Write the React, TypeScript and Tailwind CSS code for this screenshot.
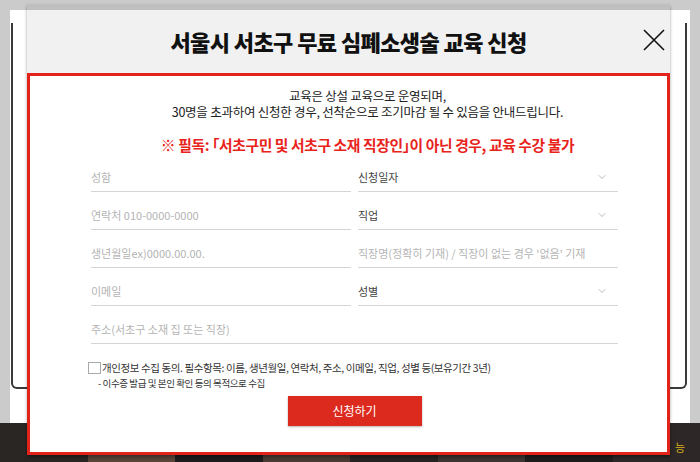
import { ChevronDown } from "lucide-react"

const fields = [
  { left: "성함", right: "신청일자", select: true },
  { left: "연락처 010-0000-0000", right: "직업", select: true },
  { left: "생년월일ex)0000.00.00.", right: "직장명(정확히 기재) / 직장이 없는 경우 '없음' 기재", select: false },
  { left: "이메일", right: "성별", select: true },
]

const strip = ["bg-[#2a2624]", "bg-[#5a4538]", "bg-[#1d1b1b]", "bg-[#4a3a33]", "bg-[#262222]", "bg-[#3b3430]", "bg-[#1f1c1c]", "bg-[#2d2727]"]

function Row({ text, select }: { text: string; select?: boolean }) {
  return (
    <div className="h-[38px] border-b border-[#d4d4d4] flex items-end justify-between pb-[7px]">
      <span className={`text-[11px] leading-[14px] ${select ? "text-[#444]" : "text-[#b4b4b4]"}`}>{text}</span>
      {select && <ChevronDown className="w-[12px] h-[12px] mr-[10px] mb-[1px] text-[#8a8a8a]" strokeWidth={1.2} />}
    </div>
  )
}

export default function App() {
  return (
    <div className="relative w-[700px] h-[462px] overflow-hidden bg-[#cbcbcb] font-['Noto_Sans_CJK_KR','Noto_Sans',sans-serif]">
      {/* page behind the modal */}
      <div className="absolute left-[10px] top-[10px] w-[680px] h-[413px] bg-white">
        <div className="ml-[1px] mt-[13px] w-[676px] h-[366px] border-x-2 border-b-2 border-[#3a3a3a] rounded-b-[6px]" />
      </div>
      <div className="absolute left-0 top-[423px] w-[700px] h-[39px] flex bg-[#222]">
        {strip.map((c, i) => (
          <div key={i} className={`flex-1 ${c}`} />
        ))}
        <span className="absolute right-[15px] top-[17px] text-[11px] leading-[14px] text-[#d8b21a]">능</span>
      </div>

      {/* modal */}
      <div className="absolute left-[27px] top-[4px] w-[643px] shadow-[0_2px_3px_rgba(0,0,0,0.35)]">
        <div className="relative h-[69px] bg-black/[0.055] flex items-center justify-center pt-[6px]">
          <h1 className="text-[22px] font-black tracking-[-0.6px] text-[#111]">서울시 서초구 무료 심폐소생술 교육 신청</h1>
          <svg className="absolute right-[5px] top-[25px]" width="22" height="22" viewBox="0 0 22 22">
            <path d="M1 1L21 21M21 1L1 21" stroke="#111" strokeWidth="1.6" fill="none" />
          </svg>
        </div>
        <div className="h-[382px] bg-white border-[3px] border-[#e1231a] pt-[12px]">
          <div className="pl-[38px] text-center">
            <p className="text-[12.5px] leading-[16px] text-[#222] tracking-[-0.25px]">교육은 상설 교육으로 운영되며,</p>
            <p className="text-[12.5px] leading-[16px] text-[#222] tracking-[-0.25px]">
              30명을 초과하여 신청한 경우, 선착순으로 조기마감 될 수 있음을 안내드립니다.
            </p>
            <p className="mt-[15px] text-[14.8px] leading-[19px] font-bold text-[#e8231b] tracking-[-0.4px] [font-feature-settings:'palt']">
              ※ 필독: 「서초구민 및 서초구 소재 직장인」이 아닌 경우, 교육 수강 불가
            </p>
          </div>

          <div className="ml-[61px] w-[527px]">
            <div className="grid grid-cols-2 gap-x-[7px]">
              {fields.map((f) => (
                <>
                  <Row key={f.left} text={f.left} />
                  <Row key={f.right} text={f.right} select={f.select} />
                </>
              ))}
            </div>
            <Row text="주소(서초구 소재 집 또는 직장)" />

            <label className="mt-[17px] -ml-[3px] flex items-center gap-[1px]">
              <span className="w-[13px] h-[12px] border border-[#aaa] bg-white" />
              <span className="text-[10.5px] leading-[13px] text-[#333] tracking-[-0.4px]">
                개인정보 수집 동의. 필수항목: 이름, 생년월일, 연락처, 주소, 이메일, 직업, 성별 등(보유기간 3년)
              </span>
            </label>
            <p className="mt-[3px] ml-[7px] text-[9.5px] leading-[13px] text-[#333] tracking-[-0.4px]">
              - 이수증 발급 및 본인 확인 등의 목적으로 수집
            </p>

            <button className="mt-[6px] mx-auto flex items-center justify-center w-[134px] h-[30px] bg-[#dc2a1e] text-white text-[12px] shadow-[0_1px_2px_rgba(0,0,0,0.3)]">
              신청하기
            </button>
          </div>
        </div>
      </div>
    </div>
  )
}
